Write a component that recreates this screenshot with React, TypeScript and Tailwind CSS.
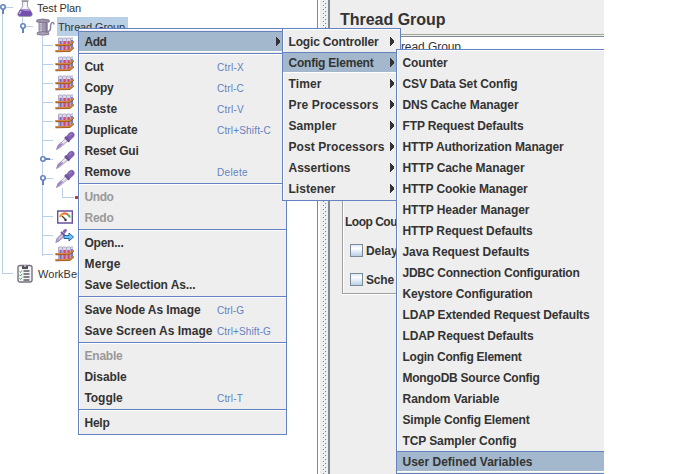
import React, { useLayoutEffect, useRef } from "react";

const SANS = "font-['Liberation_Sans',Arial,sans-serif]";

type Entry = { label: string; w: number; keys?: string; kw?: number; off?: boolean; arrow?: boolean; hot?: boolean };

const contextMenu: Entry[][] = [
  [{ label: "Add", w: 22, arrow: true, hot: true }],
  [
    { label: "Cut", w: 19, keys: "Ctrl-X", kw: 27 },
    { label: "Copy", w: 29, keys: "Ctrl-C", kw: 27 },
    { label: "Paste", w: 33, keys: "Ctrl-V", kw: 27 },
    { label: "Duplicate", w: 53, keys: "Ctrl+Shift-C", kw: 54 },
    { label: "Reset Gui", w: 54 },
    { label: "Remove", w: 46, keys: "Delete", kw: 31 },
  ],
  [
    { label: "Undo", w: 29, off: true },
    { label: "Redo", w: 29, off: true },
  ],
  [
    { label: "Open...", w: 39 },
    { label: "Merge", w: 36 },
    { label: "Save Selection As...", w: 111 },
  ],
  [
    { label: "Save Node As Image", w: 116, keys: "Ctrl-G", kw: 27 },
    { label: "Save Screen As Image", w: 128, keys: "Ctrl+Shift-G", kw: 54 },
  ],
  [
    { label: "Enable", w: 38, off: true },
    { label: "Disable", w: 42 },
    { label: "Toggle", w: 38, keys: "Ctrl-T", kw: 26 },
  ],
  [{ label: "Help", w: 25 }],
];

const addMenu: Entry[][] = [
  [
    { label: "Logic Controller", w: 90, arrow: true },
    { label: "Config Element", w: 85, arrow: true, hot: true },
    { label: "Timer", w: 33, arrow: true },
    { label: "Pre Processors", w: 90, arrow: true },
    { label: "Sampler", w: 48, arrow: true },
    { label: "Post Processors", w: 96, arrow: true },
    { label: "Assertions", w: 62, arrow: true },
    { label: "Listener", w: 47, arrow: true },
  ],
];

const configMenu: Entry[][] = [
  [
    { label: "Counter", w: 45 },
    { label: "CSV Data Set Config", w: 115 },
    { label: "DNS Cache Manager", w: 116 },
    { label: "FTP Request Defaults", w: 121 },
    { label: "HTTP Authorization Manager", w: 161 },
    { label: "HTTP Cache Manager", w: 122 },
    { label: "HTTP Cookie Manager", w: 125 },
    { label: "HTTP Header Manager", w: 127 },
    { label: "HTTP Request Defaults", w: 130 },
    { label: "Java Request Defaults", w: 127 },
    { label: "JDBC Connection Configuration", w: 177 },
    { label: "Keystore Configuration", w: 130 },
    { label: "LDAP Extended Request Defaults", w: 187 },
    { label: "LDAP Request Defaults", w: 131 },
    { label: "Login Config Element", w: 119 },
    { label: "MongoDB Source Config", w: 137 },
    { label: "Random Variable", w: 97 },
    { label: "Simple Config Element", w: 127 },
    { label: "TCP Sampler Config", w: 114 },
    { label: "User Defined Variables", w: 130, hot: true },
  ],
];

/* Text tracked so that its advance equals a given width. */
function Fit({ text, w, className = "" }: { text: string; w: number; className?: string }) {
  const ref = useRef<HTMLSpanElement>(null);
  useLayoutEffect(() => {
    const el = ref.current;
    if (!el) return;
    el.style.letterSpacing = "0px";
    const natural = el.getBoundingClientRect().width;
    el.style.letterSpacing = `${(w - natural) / text.length}px`;
  }, [text, w]);
  return (
    <span className={className}>
      <span ref={ref} className="inline-block whitespace-nowrap">
        {text}
      </span>
    </span>
  );
}

function Arrow() {
  return (
    <svg className="ml-auto shrink-0" width="4" height="9" viewBox="0 0 4 9" shapeRendering="crispEdges">
      <path d="M0 0h1v1h1v1h1v1h1v3h-1v1h-1v1h-1v1h-1z" fill="#333" />
    </svg>
  );
}

function Row({ e }: { e: Entry }) {
  return (
    <div
      className={`flex h-[21px] items-center border-y pr-[6px] pl-[5.5px] ${
        e.hot ? "border-t-[#6382bf] border-b-white bg-[#a3b8cc]" : "border-transparent"
      }`}
    >
      <Fit
        text={e.label}
        w={e.w}
        className={`shrink-0 pt-0.5 text-[12px] leading-[17px] font-bold ${e.off ? "text-[#999]" : "text-[#333]"} ${e.arrow ? "w-auto" : "w-[132.5px]"}`}
      />
      {e.keys && <Fit text={e.keys} w={e.kw ?? 27} className="pt-0.5 text-[10px] leading-[17px] text-[#6382bf]" />}
      {e.arrow && <Arrow />}
    </div>
  );
}

function Menu({ groups, className }: { groups: Entry[][]; className: string }) {
  return (
    <div className={`absolute border border-[#6382bf] bg-[#eee] ${className}`}>
      <div className="h-full border-t border-l border-white pt-px">
        {groups.map((g, i) => (
          <div key={i} className="-ml-px">
            {i > 0 && (
              <div className="h-1 pt-px">
                <div className="h-0.5 border-t border-b border-t-[#6382bf] border-b-white" />
              </div>
            )}
            {g.map((e) => (
              <Row key={e.label} e={e} />
            ))}
          </div>
        ))}
      </div>
    </div>
  );
}

function Flask() {
  return (
    <svg className="mt-0.5" width="16" height="18" viewBox="0 0 16 18">
      <path d="M5.500 1.500v5L.8 13.500Q.3 16.500 3 16.500h10q2.700 0 2.200-3L10.500 6.500v-5z" fill="#eeedf4" stroke="#a09fae" />
      <path d="M3 9.500h10l2 4q.5 2.500-2 2.500H3q-2.500 0-2-2.500z" fill="#7350ae" />
      <path d="M3.200 9.500h9.600l.8 1.500H8z" fill="#a58bcb" />
      <path d="M4 11l-1.700 3" stroke="#c3b2df" strokeWidth="1.500" />
      <path d="M4.500 1h7" stroke="#8f8f9c" strokeWidth="1.500" />
      <path d="M8.500 2.500v6" stroke="#fff" strokeWidth="1.500" />
    </svg>
  );
}

function Spool() {
  return (
    <svg width="19" height="18" viewBox="0 0 19 18">
      <path d="M11 13q3.500 1 3.500-3t1-5q2-1.500 2.500 1.500" fill="none" stroke="#8d83a0" strokeWidth="1.500" />
      <path d="M2.500 4h9v10h-9z" fill="#a59db5" />
      <path d="M4 5h2v9H4z" fill="#c8c3d0" />
      <path d="M9.500 5h2v9h-2z" fill="#81768f" />
      <path d="M2.500 7h9M2.500 9h9M2.500 11h9" stroke="#9289a4" strokeWidth=".6" />
      <path d="M.8 2q6-2 12.400 0v2q-6 1.500-12.400 0z" fill="#9c94aa" stroke="#766c87" strokeWidth=".8" />
      <path d="M1.300 14.500q6-2 11.400 0v2q-6 1.300-11.400 0z" fill="#a8a0b6" stroke="#766c87" strokeWidth=".8" />
    </svg>
  );
}

function Rack() {
  return (
    <svg width="20" height="17" viewBox="0 0 20 17">
      <path d="M4 1h3v12H4zM8 1h3v12H8zM12 1h3v12h-3zM16 1h2v11h-2z" fill="#d9d8ea" />
      <path d="M3.500 1v12M7.500 1v12M11.500 1v12M15.500 1v12" stroke="#9a96b8" strokeWidth=".8" />
      <path d="M4.500 4h2.200v9H4.500z" fill="#9060bd" />
      <path d="M8.300 4h2.500v9H8.300z" fill="#e2406f" />
      <path d="M12.300 4h2.500v9h-2.500z" fill="#d4486f" />
      <path d="M17 3v8" stroke="#4261d6" strokeWidth="1.500" />
      <path d="M4 1h3M8 1h3M12 1h3M16 1h2" stroke="#b4b2c6" />
      <path d="M.5 8.200l14-.2L18.500 4.800M.5 14.300l14-.3 4-3.500" fill="none" stroke="#96541f" strokeWidth="2" />
      <path d="M.5 7.700l14-.2 4-3.200M.5 13.800l14-.3 4-3.500" fill="none" stroke="#d38840" strokeWidth="1.300" />
    </svg>
  );
}

function Dropper() {
  return (
    <svg width="20" height="20" viewBox="0 0 20 20">
      <path d="M1.500 18.500l1.500-4L11 7l2.500 2.500L5.500 16.500z" fill="#d7d2e1" stroke="#a7a1b4" strokeWidth=".8" />
      <path d="M1.200 19l1.500-4.500 4-3.500 1.500 2-4.500 4z" fill="#9f83c4" />
      <path d="M6.500 12.500L12 8" stroke="#fff" />
      <path d="M10 6l4.500 4.500" stroke="#6e4f9d" strokeWidth="2.500" />
      <path d="M11.500 5.500l3-3.500q2.500-1.500 4 0t0 4L15 9z" fill="#8260b3" stroke="#68509a" strokeWidth=".7" />
      <path d="M14.500 4.500l2-1.500" stroke="#b99bd9" />
    </svg>
  );
}

function Gauge() {
  return (
    <svg width="20" height="14" viewBox="0 0 20 14">
      <path d="M2.700 1h14.600v12H2.700z" fill="#fff" stroke="#66539b" strokeWidth="1.400" />
      <path d="M5 7q1-3 3.500-3.500" fill="none" stroke="#f09c32" strokeWidth="2.200" />
      <path d="M8 3.800q3-1 5 1" fill="none" stroke="#f06a46" strokeWidth="2.200" />
      <path d="M12.500 4.500q2 1 2.500 3" fill="none" stroke="#58b964" strokeWidth="2.200" />
      <path d="M7 6l4 4" stroke="#444" strokeWidth="1.200" />
      <circle cx="10.500" cy="10" r="1.200" fill="#333" />
    </svg>
  );
}

function DropperArrow() {
  return (
    <svg width="20" height="16" viewBox="0 0 20 16">
      <path d="M.8 14.500l1.200-4L7 5.500l2.500 2.500-5.500 5z" fill="#b39fd0" stroke="#8c7aae" strokeWidth=".8" />
      <path d="M3.500 11L8 7" stroke="#f0edf5" />
      <path d="M6 4l4 4" stroke="#76549f" strokeWidth="2" />
      <path d="M7.500 3.500l1.500-2q2.500-1.200 3 1L9.500 6z" fill="#8565b0" />
      <path d="M9 7.500h5V5l4.500 4-4.500 4v-2.500H9z" fill="#6cc4f2" stroke="#2464a8" />
    </svg>
  );
}

function Clipboard() {
  return (
    <svg width="16" height="19" viewBox="0 0 16 19">
      <rect x="1" y="1.500" width="14" height="16.500" rx="2" fill="#f4f4f7" stroke="#77727f" strokeWidth="1.400" />
      <path d="M5 2h6v3H5z" fill="#55515c" />
      <path d="M7 1h2v2H7z" fill="#aaa" />
      <path d="M6.500 7h6M6.500 10h6M6.500 13h6M6.500 16h6" stroke="#5b5962" strokeWidth="1.300" />
      <path d="M2.500 7.500l1 1 1.500-2M2.500 11l1 1L5 10M2.500 14.500l1 1L5 13.500" fill="none" stroke="#4eaa50" />
    </svg>
  );
}

function TreeLines() {
  const kids = [45, 64, 83, 102, 121, 140, 159, 178, 216, 235, 254];
  return (
    <svg className="absolute top-0 left-0" width="80" height="290" viewBox="0 0 80 290" shapeRendering="crispEdges">
      <g fill="#b8cfe5">
        <path d="M2 10h1v264h-1zM2 273h11v1H2zM5 7h8v1H5zM22 17h1v8h-1zM26 26h7v1h-7zM42 36h1v220h-1zM62 188h1v10h-1zM62 197h12v1H62z" />
        {kids.map((y) => (
          <rect key={y} x="42" y={y} width="11" height="1" />
        ))}
      </g>
      <g fill="#6382bf">
        <path d="M2 9h2v5H2zM22 28h2v5h-2zM45 158h5v2h-5zM42 180h2v5h-2z" />
      </g>
      <g fill="#fff" stroke="#6382bf" strokeWidth="1.600" shapeRendering="geometricPrecision">
        <circle cx="3" cy="7" r="2.200" />
        <circle cx="23" cy="26" r="2.200" />
        <circle cx="43" cy="159" r="2.200" />
        <circle cx="43" cy="178" r="2.200" />
      </g>
      <rect x="75" y="196" width="5" height="3" fill="#b73b45" />
    </svg>
  );
}

function Tree() {
  const icons = [Rack, Rack, Rack, Rack, Rack, Dropper, Dropper, Dropper, null, Gauge, DropperArrow, Rack];
  return (
    <div className="relative h-full w-[317px] shrink-0 overflow-hidden bg-white text-[11px] leading-[17px] text-[#333]">
      <TreeLines />
      <div className="relative -mt-0.5">
        <div className="flex h-[19px] items-center pl-[17px]">
          <Flask />
          <Fit text="Test Plan" w={44} className="ml-1 pt-0.5" />
        </div>
        <div className="flex h-[19px] items-center pl-[36px]">
          <Spool />
          <Fit text="Thread Group" w={67} className="ml-0.5 h-[19px] w-[71px] bg-[#b8cfe5] pt-0.5 pl-px" />
        </div>
        {icons.map((Icon, i) => (
          <div key={i} className="flex h-[19px] items-center pl-[55px]">
            {Icon && <Icon />}
          </div>
        ))}
        <div className="flex h-[19px] items-center pl-[17px]">
          <Clipboard />
          <Fit text="WorkBench" w={57} className="ml-[5px] pt-0.5" />
        </div>
      </div>
    </div>
  );
}

function SplitBar() {
  return (
    <div className="flex h-full w-[13px] shrink-0 border-l border-[#7a8a99] bg-[#eee]">
      <div className="w-0.5 bg-white" />
      <svg className="h-full w-2" shapeRendering="crispEdges">
        <defs>
          <pattern id="bumps" width="4" height="4" patternUnits="userSpaceOnUse">
            <path d="M2 0h1v1H2zM0 2h1v1H0z" fill="#fff" />
            <path d="M3 1h1v1H3zM1 3h1v1H1z" fill="#6f8092" />
          </pattern>
        </defs>
        <rect x="2" width="5" height="474" fill="url(#bumps)" />
      </svg>
      <div className="w-0.5 bg-[#7a8a99]" />
    </div>
  );
}

function Check({ label, w }: { label: string; w: number }) {
  return (
    <div className="flex h-[29px] items-center pl-[6px]">
      <div className="h-[13px] w-[13px] border border-[#7a8a99] bg-linear-to-b from-[#dde8f3] via-white via-30% to-[#b8cfe5]" />
      <Fit text={label} w={w} className="ml-[3px]" />
    </div>
  );
}

function Editor() {
  return (
    <div className="flex h-full w-[274px] flex-col bg-[#eee] text-[12px] font-bold text-[#333]">
      <div className="h-[34px] pt-[8px] pl-[10px] text-[16px] leading-[24px]">
        <Fit text="Thread Group" w={105.5} />
      </div>
      <div className="h-[3px] border-t border-b border-t-[#a5a595] border-b-[#7a8a99]" />
      <div className="h-[22px] bg-white pl-[57px] text-[12px] leading-[20px] font-normal">
        <Fit text="Thread Group" w={74} />
      </div>
      <div className="mt-[131px] ml-3 h-[104px] border-b border-l border-[#a0a0a0]">
        <div className="h-[103px] border-l border-white pt-[20px]">
          <div className="mb-0.5 pl-px leading-[24px]">
            <Fit text="Loop Cou" w={52} />
          </div>
          <Check label="Delay" w={31.5} />
          <Check label="Sche" w={28} />
        </div>
      </div>
      <div className="ml-3 h-px bg-white" />
    </div>
  );
}

export default function App() {
  return (
    <div className={`relative flex h-[474px] w-[681px] overflow-hidden bg-white ${SANS}`}>
      <Tree />
      <SplitBar />
      <Editor />
      <Menu groups={contextMenu} className="top-[28px] left-[78px] h-[407px] w-[209px]" />
      <Menu groups={addMenu} className="top-[28px] left-[282px] h-[173px] w-[119px]" />
      <Menu groups={configMenu} className="top-[49px] left-[396px] h-[425px] w-[208px] border-r-0" />
    </div>
  );
}
